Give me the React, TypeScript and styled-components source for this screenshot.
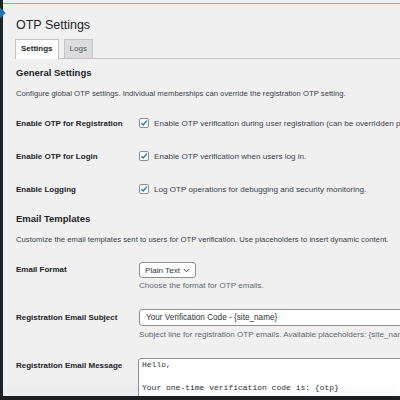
import React from 'react';
import styled, { createGlobalStyle } from 'styled-components';

const GlobalStyle = createGlobalStyle`
    html, body {
        margin: 0;
        padding: 0;
        background: #f0f0f1;
        overflow: hidden;
    }
    body {
        font-family: "Liberation Sans", Arial, sans-serif;
        font-size: 8px;
        color: #3c434a;
    }
`;

const Shell = styled.div`
    position: relative;
    display: flex;
    width: 400px;
    height: 400px;
    overflow: hidden;
`;

const AdminMenu = styled.div`
    position: relative;
    flex: none;
    width: 3px;
    background: #1d2327;
`;

const MenuArrow = styled.span`
    position: absolute;
    top: 9px;
    left: -4px;
    width: 8px;
    height: 8px;
    background: #2271b1;
    transform: rotate(45deg);
`;

const Main = styled.div`
    flex: 1;
    min-width: 0;
    padding-top: 3px;
`;

const TopLine = styled.div`
    height: 1px;
    background: #72aee6;
`;

const Wrap = styled.div`
    width: 700px;
    padding: 0 13px;
`;

const Title = styled.h1`
    margin: 13px 0 0;
    font-size: 12.5px;
    line-height: 16px;
    font-weight: 400;
    color: #1d2327;
`;

const TabBar = styled.div`
    display: flex;
    gap: 5px;
    margin: 6px 0 0 -1px;
    border-bottom: 1px solid #c3c4c7;
`;

const Tab = styled.div<{ $active?: boolean }>`
    padding: 0 5px;
    line-height: 18px;
    font-size: 8px;
    font-weight: ${p => (p.$active ? 700 : 400)};
    color: ${p => (p.$active ? '#1d2327' : '#50575e')};
    background: ${p => (p.$active ? '#fff' : '#dcdcde')};
    border: 1px solid #c3c4c7;
    border-bottom: none;
    margin-bottom: ${p => (p.$active ? '-1px' : '0')};
    padding-bottom: ${p => (p.$active ? '1px' : '0')};
`;

const SectionTitle = styled.h2<{ $top: number }>`
    margin: ${p => p.$top}px 0 0;
    font-size: 9.5px;
    line-height: 12px;
    font-weight: 700;
    color: #1d2327;
`;

const Intro = styled.p`
    margin: 8.5px 0 0;
    font-size: 7.7px;
    line-height: 11px;
    color: #3c434a;
`;

const Table = styled.div<{ $top: number }>`
    margin-top: ${p => p.$top}px;
`;

const Row = styled.div<{ $pad: number }>`
    display: grid;
    grid-template-columns: 123px 1fr;
    align-items: start;
    padding: ${p => p.$pad}px 0;
`;

const Label = styled.div<{ $line: number }>`
    font-size: 8px;
    line-height: ${p => p.$line}px;
    font-weight: 700;
    color: #1d2327;
    white-space: nowrap;
`;

const CheckLine = styled.label`
    display: flex;
    align-items: center;
    gap: 5px;
    font-size: 8.1px;
    line-height: 11px;
    color: #3c434a;
    white-space: nowrap;
`;

const Box = styled.span`
    display: inline-flex;
    align-items: center;
    justify-content: center;
    flex: none;
    width: 8px;
    height: 8px;
    border: 1px solid #8c8f94;
    border-radius: 2px;
    background: #fff;
`;

const Field = styled.div`
    display: flex;
    flex-direction: column;
    align-items: flex-start;
`;

const Select = styled.div`
    display: flex;
    align-items: center;
    gap: 3px;
    height: 16px;
    box-sizing: border-box;
    padding: 0 5px;
    border: 1px solid #8c8f94;
    border-radius: 3px;
    background: #fff;
    font-size: 8.1px;
    color: #2c3338;
`;

const TextInput = styled.div`
    display: flex;
    align-items: center;
    width: 420px;
    height: 17px;
    box-sizing: border-box;
    padding: 0 6px;
    border: 1px solid #8c8f94;
    border-radius: 3px;
    background: #fff;
    font-size: 8.2px;
    color: #2c3338;
`;

const Help = styled.p<{ $top: number }>`
    margin: ${p => p.$top}px 0 0;
    font-size: 8.1px;
    line-height: 11px;
    color: #646970;
    white-space: nowrap;
`;

const Message = styled.textarea`
    display: block;
    width: 420px;
    height: 60px;
    box-sizing: border-box;
    margin: 0 0 0 -1px;
    padding: 0 3px;
    border: 1px solid #8c8f94;
    border-radius: 3px;
    background: #fff;
    font-family: "Liberation Mono", "Courier New", monospace;
    font-size: 8px;
    line-height: 11.5px;
    color: #2c3338;
    resize: none;
    overflow: hidden;
`;

const Dock = styled.div`
    position: absolute;
    left: 0;
    right: 0;
    bottom: 0;
    height: 4px;
    background: #1e1f20;
    box-shadow: 0 -6px 8px rgba(0, 0, 0, 0.05);
`;

const Check = () => (
    <Box>
        <svg width="8" height="8" viewBox="0 0 8 8">
            <path d="M1.3 4.2 L3.2 6 L6.8 1.6" fill="none" stroke="#2271b1" strokeWidth="1.3" />
        </svg>
    </Box>
);

const toggles = [
    { label: 'Enable OTP for Registration', text: 'Enable OTP verification during user registration (can be overridden per membership).' },
    { label: 'Enable OTP for Login', text: 'Enable OTP verification when users log in.' },
    { label: 'Enable Logging', text: 'Log OTP operations for debugging and security monitoring.' },
];

const App = () => {
    return (
        <Shell>
            <GlobalStyle />
            <AdminMenu>
                <MenuArrow />
            </AdminMenu>
            <Main>
                <TopLine />
                <Wrap>
                    <Title>OTP Settings</Title>
                    <TabBar>
                        <Tab $active>Settings</Tab>
                        <Tab>Logs</Tab>
                    </TabBar>

                    <SectionTitle $top={8}>General Settings</SectionTitle>
                    <Intro>Configure global OTP settings. Individual memberships can override the registration OTP setting.</Intro>
                    <Table $top={8}>
                        {toggles.map((t, i) => (
                            <Row key={i} $pad={11}>
                                <Label $line={11}>{t.label}</Label>
                                <CheckLine>
                                    <Check />
                                    {t.text}
                                </CheckLine>
                            </Row>
                        ))}
                    </Table>

                    <SectionTitle $top={7.5}>Email Templates</SectionTitle>
                    <Intro>Customize the email templates sent to users for OTP verification. Use placeholders to insert dynamic content.</Intro>
                    <Table $top={8.5}>
                        <Row $pad={9}>
                            <Label $line={16}>Email Format</Label>
                            <Field>
                                <Select>
                                    Plain Text
                                    <svg width="7" height="5" viewBox="0 0 7 5">
                                        <path d="M0.8 1 L3.5 3.8 L6.2 1" fill="none" stroke="#2c3338" strokeWidth="0.9" />
                                    </svg>
                                </Select>
                                <Help $top={2}>Choose the format for OTP emails.</Help>
                            </Field>
                        </Row>
                        <Row $pad={9}>
                            <Label $line={17}>Registration Email Subject</Label>
                            <Field>
                                <TextInput>Your Verification Code - {'{site_name}'}</TextInput>
                                <Help $top={3}>Subject line for registration OTP emails. Available placeholders: {'{site_name}'}, {'{otp}'}</Help>
                            </Field>
                        </Row>
                        <Row $pad={9}>
                            <Label $line={16}>Registration Email Message</Label>
                            <Message readOnly value={'Hello,\n\nYour one-time verification code is: {otp}\n\nThis code will expire in {expiry} minutes.'} />
                        </Row>
                    </Table>
                </Wrap>
            </Main>
            <Dock />
        </Shell>
    );
};

export default App;
